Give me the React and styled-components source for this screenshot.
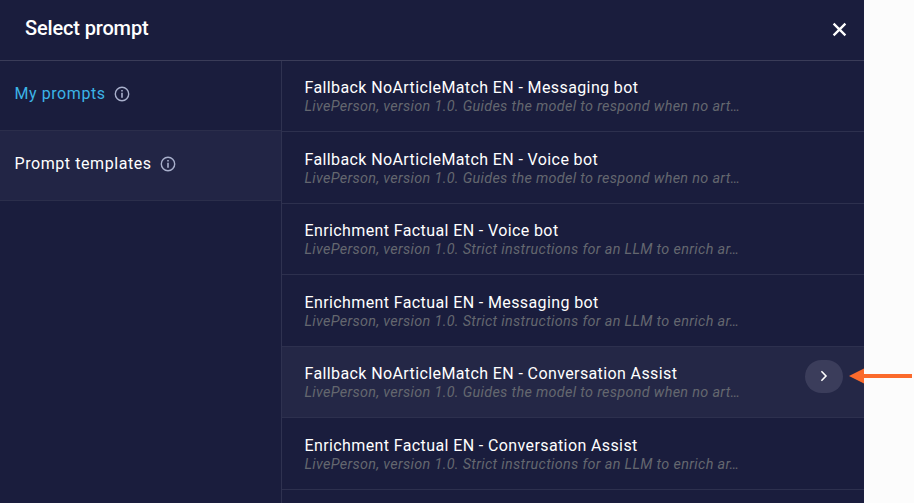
import styled, { createGlobalStyle } from 'styled-components';

const PROMPTS = [
  { title: 'Fallback NoArticleMatch EN - Messaging bot', text: 'LivePerson, version 1.0. Guides the model to respond when no art…' },
  { title: 'Fallback NoArticleMatch EN - Voice bot', text: 'LivePerson, version 1.0. Guides the model to respond when no art…' },
  { title: 'Enrichment Factual EN - Voice bot', text: 'LivePerson, version 1.0. Strict instructions for an LLM to enrich ar…' },
  { title: 'Enrichment Factual EN - Messaging bot', text: 'LivePerson, version 1.0. Strict instructions for an LLM to enrich ar…' },
  { title: 'Fallback NoArticleMatch EN - Conversation Assist', text: 'LivePerson, version 1.0. Guides the model to respond when no art…', active: true },
  { title: 'Enrichment Factual EN - Conversation Assist', text: 'LivePerson, version 1.0. Strict instructions for an LLM to enrich ar…' },
];

const InfoIcon = () => (
  <svg width="16" height="16" viewBox="0 0 16 16" fill="none" stroke="#a9b0cc">
    <circle cx="8" cy="8" r="6.7" strokeWidth="1.4" />
    <path d="M8 6.8v5M8 4v1.6" strokeWidth="1.6" />
  </svg>
);

const App = () => {
  return (
    <Page>
      <GlobalStyle />
      <Dialog>
        <Header>
          <Title>Select prompt</Title>
          <CloseButton aria-label="Close">
            <svg width="15" height="15" viewBox="0 0 15 15" stroke="#fff" strokeWidth="2.3">
              <path d="M1.6 1.6l11.8 11.8M13.4 1.6L1.6 13.4" />
            </svg>
          </CloseButton>
        </Header>
        <Content>
          <Sidebar>
            <Tab $selected>
              My prompts
              <InfoIcon />
            </Tab>
            <Tab $shaded>
              Prompt templates
              <InfoIcon />
            </Tab>
          </Sidebar>
          <List>
            {PROMPTS.map((prompt) => (
              <Row key={prompt.title} $active={prompt.active}>
                <RowText>
                  <RowTitle>{prompt.title}</RowTitle>
                  <Description>{prompt.text}</Description>
                </RowText>
                {prompt.active ? (
                  <OpenButton aria-label="Open">
                    <svg width="8" height="12" viewBox="0 0 8 12" fill="none" stroke="#fff" strokeWidth="1.6">
                      <path d="M1.4 1.3L6 6l-4.6 4.7" />
                    </svg>
                  </OpenButton>
                ) : null}
              </Row>
            ))}
          </List>
        </Content>
      </Dialog>
      <Arrow width="64" height="18" viewBox="0 0 64 18">
        <path d="M12 9h51" stroke="#fb6a2c" strokeWidth="4" />
        <path d="M0 9L15 1.5v15z" fill="#fb6a2c" />
      </Arrow>
    </Page>
  );
};

/* **********
 *  STYLES  *
 ********* */

const GlobalStyle = createGlobalStyle`
  * {
    box-sizing: border-box;
  }
  body {
    margin: 0;
    background: #fcfcfc;
    font-family: Roboto, 'Liberation Sans', sans-serif;
    overflow: hidden;
  }
`;

const Page = styled.div`
  position: relative;
  height: 503px;
  overflow: hidden;
`;
const Dialog = styled.div`
  width: 864px;
  height: 503px;
  display: flex;
  flex-direction: column;
  background: #1a1d3d;
  color: #fff;
`;
const Header = styled.header`
  height: 61px;
  flex: none;
  display: flex;
  align-items: center;
  justify-content: space-between;
  padding: 0 17px 4px 25px;
  border-bottom: 1px solid #3a3c58;
`;
const Title = styled.h1`
  margin: 0;
  font-size: 20px;
  font-weight: 500;
  letter-spacing: -0.15px;
`;
const CloseButton = styled.button`
  display: flex;
  padding: 0;
  margin-top: 3px;
  border: none;
  background: transparent;
`;
const Content = styled.div`
  display: flex;
  flex: 1;
  min-height: 0;
`;
const Sidebar = styled.nav`
  width: 282px;
  border-right: 1px solid #2f3250;
`;
const Tab = styled.div`
  height: 70px;
  display: flex;
  align-items: center;
  gap: 8px;
  padding: 0 14.5px 4px;
  font-size: 16px;
  letter-spacing: 0.57px;
  color: ${(props) => (props.$selected ? '#3cb4e7' : '#fff')};
  background: ${(props) => (props.$shaded ? '#222545' : 'transparent')};
  border-bottom: 1px solid #2b2e4b;
`;
const List = styled.div`
  flex: 1;
  overflow: hidden;
`;
const Row = styled.div`
  height: 71px;
  display: flex;
  justify-content: space-between;
  padding: 17px 21px 0 22.5px;
  border-bottom: 1px solid #2d304e;
  background: ${(props) => (props.$active ? '#242746' : 'transparent')};
  &:nth-child(even) {
    height: 72px;
    padding-top: 18px;
  }
`;
const RowText = styled.div`
  white-space: nowrap;
`;
const RowTitle = styled.div`
  font-size: 16px;
  line-height: 19px;
  letter-spacing: 0.39px;
`;
const Description = styled.div`
  font-size: 14.4px;
  line-height: 20px;
  font-style: italic;
  letter-spacing: 0.32px;
  color: #64676f;
`;
const OpenButton = styled.button`
  width: 38px;
  height: 33px;
  margin-top: -4px;
  display: flex;
  align-items: center;
  justify-content: center;
  padding: 0 0 1px;
  border: none;
  border-radius: 17px;
  background: #3b3d5b;
`;
// pointer laid over the edge of the dialog
const Arrow = styled.svg`
  position: absolute;
  left: 849px;
  top: 367px;
`;

export default App;
